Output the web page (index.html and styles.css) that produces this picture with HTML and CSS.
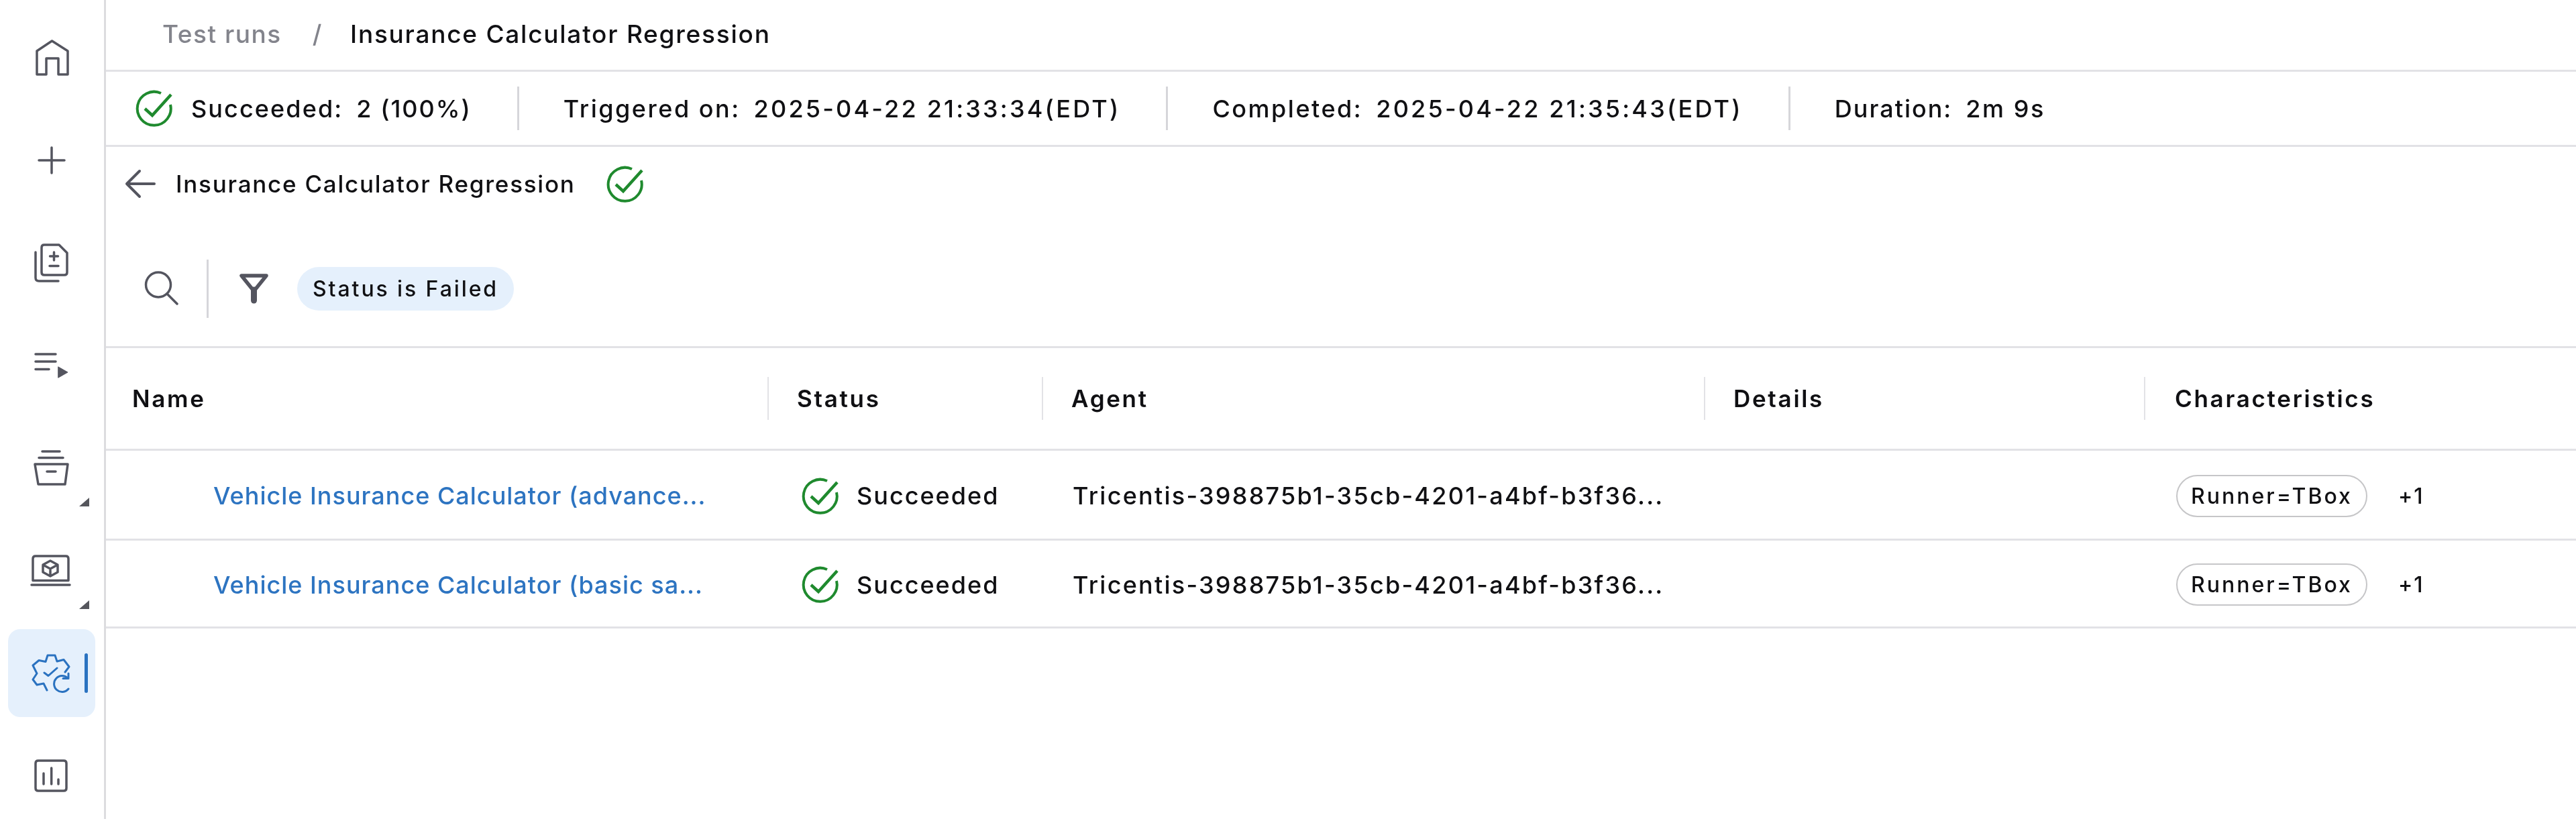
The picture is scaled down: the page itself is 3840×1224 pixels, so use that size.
FILE: index.html
```html
<!DOCTYPE html>
<html lang="en">
<head>
<meta charset="utf-8">
<title>Insurance Calculator Regression</title>
<link rel="stylesheet" href="styles.css">
</head>
<body>
<div class="app">
  <nav class="sidebar">
    <a class="nav-item"><svg class="nav-icon" viewBox="0 0 60 60"><path d="M30.5 5 L8 20 V55 H22 V31 H40 V55 H54 V20 Z"/></svg></a>
    <a class="nav-item"><svg class="nav-icon" viewBox="0 0 60 60"><path d="M11 30 H49 M30 11 V49"/></svg></a>
    <a class="nav-item"><svg class="nav-icon" viewBox="0 0 60 60"><path d="M19 3 H41 L53 15 V44 Q53 48 49 48 H19 Q15 48 15 44 V7 Q15 3 19 3 Z M6 14 V52 Q6 57 11 57 H40 M33.500 14 V26 M27.500 20 H39.500 M27 34.500 H40"/></svg></a>
    <a class="nav-item"><svg class="nav-icon" viewBox="0 0 60 60"><path d="M6 13 H36 M6 24 H36 M6 35.500 H26"/><path class="solid" d="M40 32 L54 40 L40 48 Z"/></svg></a>
    <a class="nav-item has-menu"><svg class="nav-icon" viewBox="0 0 60 60"><path d="M16 5 H42 M11 14.500 H47 M5 24 H54 L50 54 H10 Z M23 35 H36"/></svg></a>
    <a class="nav-item has-menu"><svg class="nav-icon" viewBox="0 0 60 60"><path d="M6 8 H51 Q55 8 55 12 V44.500 H2 V12 Q2 8 6 8 Z M0 51 H57 M28 15 L39 21 V32 L28 38 L17 32 V21 Z M17 21 L28 27 L39 21 M28 27 V38"/></svg></a>
    <a class="nav-item active"><svg class="nav-icon gear" viewBox="0 0 60 60"><path d="M23 55 L18 45 L8 47 L2 39 L8 30 L2 18 L11 10.500 L21 12.500 L24 3 H35 L38 12 L48 9.500 L56 20 L50 28 M19 29 L25 33.500 L38 22 M54 37 A12 12 0 1 0 55 53 M55 30 V37.500 H47"/></svg></a>
    <a class="nav-item"><svg class="nav-icon" viewBox="0 0 60 60"><path d="M10 7 H48 Q52 7 52 11 V48 Q52 52 48 52 H10 Q6 52 6 48 V11 Q6 7 10 7 Z M18 26 V42 M29.700 18 V42 M40 35 V42"/></svg></a>
  </nav>
  <main class="content">
    <div class="crumbs">
      <span class="crumb-link">Test runs</span>
      <span class="crumb-sep">/</span>
      <span class="crumb-current">Insurance Calculator Regression</span>
    </div>
    <div class="stats">
      <svg class="check" viewBox="0 0 54 55"><path d="M37 5 A25 25 0 1 0 51 22"/><path class="tick" d="M13 28 L24 38 L52 7"/></svg>
      <span class="stat first">Succeeded:<b>2 (100%)</b></span>
      <i class="sep"></i>
      <span class="stat">Triggered on:<b>2025-04-22 21:33:34(EDT)</b></span>
      <i class="sep"></i>
      <span class="stat">Completed:<b>2025-04-22 21:35:43(EDT)</b></span>
      <i class="sep"></i>
      <span class="stat last">Duration:<b>2m 9s</b></span>
    </div>
    <div class="title-row">
      <svg class="back" viewBox="0 0 43 42"><path d="M43 21 H3 M21 2 L2 21 L21 40"/></svg>
      <span class="title">Insurance Calculator Regression</span>
      <svg class="check" viewBox="0 0 54 55"><path d="M37 5 A25 25 0 1 0 51 22"/><path class="tick" d="M13 28 L24 38 L52 7"/></svg>
    </div>
    <div class="toolbar">
      <svg class="search" viewBox="0 0 50 50"><circle cx="21" cy="19.500" r="18.500"/><path d="M34 33 L49 48"/></svg>
      <i class="tool-sep"></i>
      <svg class="filter" viewBox="0 0 43 44"><path d="M3 3 H40 L21.500 26 Z"/><path class="stem" d="M21.500 24 V40"/></svg>
      <span class="chip">Status is Failed</span>
    </div>
    <div class="grid head">
      <div class="th first-col">Name</div>
      <div class="th">Status</div>
      <div class="th">Agent</div>
      <div class="th">Details</div>
      <div class="th">Characteristics</div>
    </div>
    <div class="grid row tall">
      <div class="td name-cell"><a class="link">Vehicle Insurance Calculator (advance...</a></div>
      <div class="td status-cell"><svg class="check" viewBox="0 0 54 55"><path d="M37 5 A25 25 0 1 0 51 22"/><path class="tick" d="M13 28 L24 38 L52 7"/></svg><span>Succeeded</span></div>
      <div class="td agent-cell">Tricentis-398875b1-35cb-4201-a4bf-b3f36...</div>
      <div class="td"></div>
      <div class="td char-cell"><span class="tag">Runner=TBox</span><span class="more">+1</span></div>
    </div>
    <div class="grid row">
      <div class="td name-cell"><a class="link">Vehicle Insurance Calculator (basic sa...</a></div>
      <div class="td status-cell"><svg class="check" viewBox="0 0 54 55"><path d="M37 5 A25 25 0 1 0 51 22"/><path class="tick" d="M13 28 L24 38 L52 7"/></svg><span>Succeeded</span></div>
      <div class="td agent-cell">Tricentis-398875b1-35cb-4201-a4bf-b3f36...</div>
      <div class="td"></div>
      <div class="td char-cell"><span class="tag">Runner=TBox</span><span class="more">+1</span></div>
    </div>
  </main>
</div>
</body>
</html>
```
FILE: styles.css
```css
* { box-sizing: border-box; }
html, body { margin: 0; height: 100%; background: #fff; }
body { font-family: Inter, "Liberation Sans", sans-serif; font-size: 36px; font-weight: 450; color: #101013; }
.app { display: flex; width: 3840px; height: 1224px; overflow: hidden; filter: blur(0.7px); }

.sidebar { width: 158px; flex: none; height: 1221px; border-right: 3px solid #dcdcdf; padding: 20px 0 0 12px; display: flex; flex-direction: column; gap: 22px; }
.nav-item { position: relative; flex: none; width: 130px; height: 131px; border-radius: 18px; display: flex; align-items: center; justify-content: center; color: #54555f; }
.nav-icon { width: 60px; height: 60px; overflow: visible; fill: none; stroke: currentColor; stroke-width: 3.5; stroke-linejoin: round; stroke-linecap: round; }
.nav-icon .solid { fill: currentColor; stroke-width: 1; }
.gear { stroke-width: 3; }
.has-menu::after { content: ""; position: absolute; left: 106px; top: 110px; width: 15px; height: 13px; background: #55565c; clip-path: polygon(100% 0, 100% 100%, 0 100%); }
.active { background: #e5f0fc; color: #2a72c0; }
.active::after { content: ""; position: absolute; left: 114px; top: 36px; width: 5px; height: 59px; border-radius: 3px; background: #2a72c0; }

.content { flex: 1; min-width: 0; display: flex; flex-direction: column; }
.crumbs { height: 107px; flex: none; border-bottom: 3px solid #e2e2e6; display: flex; align-items: center; padding: 0 0 4px 84px; font-size: 37px; letter-spacing: 1.75px; }
.crumb-link { color: #83848c; letter-spacing: 1.5px; }
.crumb-sep { color: #83848c; margin: 0 41px 0 46px; }

.stats { height: 112px; flex: none; border-bottom: 3px solid #e2e2e6; display: flex; align-items: center; padding-left: 45px; letter-spacing: 2.5px; }
.stat b { font-weight: 450; margin-left: 20px; letter-spacing: 3.2px; }
.stat.first { margin-left: 28px; letter-spacing: 2.1px; }
.stat.first b { letter-spacing: 2px; }
.stat.last { letter-spacing: 2px; }
.stat.last b { letter-spacing: 2.6px; }
.sep { width: 3px; height: 65px; background: #d6d6da; margin: 0 66px 0 68px; flex: none; }
.check { width: 54px; height: 55px; flex: none; overflow: visible; fill: none; stroke: #1f8a2e; stroke-width: 4; }
.check .tick { stroke-width: 4.5; }

.title-row { height: 110px; flex: none; display: flex; align-items: center; padding-left: 29px; }
.back { width: 43px; height: 42px; fill: none; stroke: #54555f; stroke-width: 4; stroke-linecap: round; stroke-linejoin: round; overflow: visible; }
.title { margin: 0 47px 0 32px; font-size: 35px; letter-spacing: 1.75px; }

.toolbar { height: 190px; flex: none; border-bottom: 3px solid #e2e2e6; display: flex; align-items: center; padding: 15px 0 0 57px; }
.search { width: 50px; height: 50px; fill: none; stroke: #54555f; stroke-width: 3.5; stroke-linecap: round; overflow: visible; }
.tool-sep { width: 3px; height: 87px; background: #d6d6da; margin: 0 46px 0 43px; flex: none; }
.filter { width: 43px; height: 44px; fill: none; stroke: #54555f; stroke-width: 5.5; stroke-linejoin: round; overflow: visible; }
.filter .stem { stroke-width: 9; stroke-linecap: round; }
.chip { height: 65px; margin-left: 43px; padding: 0 23px; border-radius: 33px; background: #e5f0fc; display: flex; align-items: center; font-size: 32px; letter-spacing: 2.9px; font-weight: 500; }

.grid { display: grid; grid-template-columns: 986px 409px 987px 656px 644px; align-items: center; flex: none; border-bottom: 3px solid #e2e2e6; }
.head { height: 153px; }
.row { height: 131px; }
.row.tall { height: 134px; }
.th { height: 64px; border-left: 2px solid #e2e2e6; padding-left: 42px; display: flex; align-items: center; font-size: 35px; font-weight: 600; letter-spacing: 2.7px; }
.th:last-child { padding-left: 44px; }
.first-col { border-left: 0; padding-left: 39px; }
.td { display: flex; align-items: center; min-width: 0; white-space: nowrap; padding-top: 3px; }
.name-cell { padding-left: 160px; }
.link { color: #2d74c1; letter-spacing: 1px; }
.status-cell { padding-left: 52px; gap: 27px; letter-spacing: 2px; }
.agent-cell { padding-left: 46px; letter-spacing: 2.25px; }
.char-cell { padding-left: 48px; }
.tag { height: 63px; padding: 0 20px; border: 2px solid #c6c6c8; border-radius: 32px; display: flex; align-items: center; font-size: 32px; letter-spacing: 3px; }
.more { margin-left: 46px; font-size: 32px; letter-spacing: 2px; }
```
